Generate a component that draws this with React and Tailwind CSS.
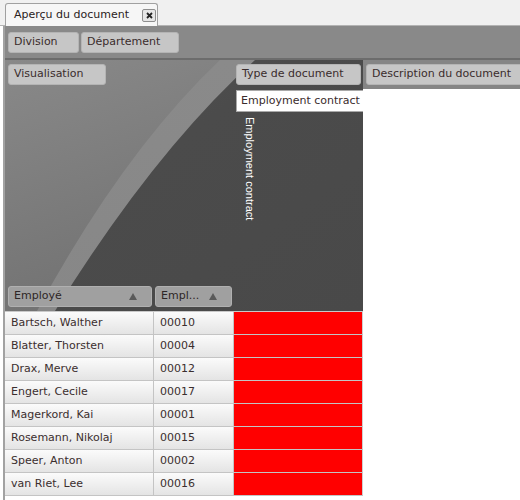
import React from "react";

const rows = [
  ["Bartsch, Walther", "00010"],
  ["Blatter, Thorsten", "00004"],
  ["Drax, Merve", "00012"],
  ["Engert, Cecile", "00017"],
  ["Magerkord, Kai", "00001"],
  ["Rosemann, Nikolaj", "00015"],
  ["Speer, Anton", "00002"],
  ["van Riet, Lee", "00016"],
];

function Btn({ children, className }) {
  return (
    <div
      className={
        "h-[21px] shrink-0 rounded-[3px] bg-[#c6c6c6] border border-[#b4b4b4] flex items-center pl-[5px] text-[#3a2c2c] whitespace-nowrap overflow-hidden " +
        className
      }
    >
      {children}
    </div>
  );
}

function HeadBtn({ children, className }) {
  return (
    <div
      className={
        "h-[21px] shrink-0 rounded-[3px] bg-[#a0a0a0] border border-[#b0b0b0] flex items-center pl-[5px] pr-[14px] text-[#2e2626] whitespace-nowrap " +
        className
      }
    >
      <span>{children}</span>
      <svg className="ml-auto" width="8" height="7" viewBox="0 0 8 7">
        <path d="M4,0 L8,7 L0,7 Z" fill="#5a5a5a" />
      </svg>
    </div>
  );
}

function Swoosh() {
  return (
    <svg
      className="absolute inset-0"
      width="358"
      height="251"
      viewBox="0 0 358 251"
    >
      <defs>
        <linearGradient id="outer" x1="0" y1="0" x2="0" y2="1">
          <stop offset="0" stopColor="#8a8a8a" />
          <stop offset="1" stopColor="#878787" />
        </linearGradient>
        <linearGradient id="inner" x1="0" y1="0" x2="0.3" y2="1">
          <stop offset="0" stopColor="#898989" />
          <stop offset="1" stopColor="#727272" />
        </linearGradient>
        <linearGradient id="dark" x1="0" y1="0" x2="1" y2="1">
          <stop offset="0" stopColor="#555555" />
          <stop offset="0.4" stopColor="#4b4b4b" />
          <stop offset="1" stopColor="#494949" />
        </linearGradient>
      </defs>
      <rect x="0" y="0" width="358" height="251" fill="url(#dark)" />
      <path d="M0,0 H250 Q150,90 50,251 H0 Z" fill="url(#outer)" />
      <path d="M0,0 H215 Q118,92 32,251 H0 Z" fill="url(#inner)" />
    </svg>
  );
}

export default function App() {
  return (
    <div className="w-[520px] h-[500px] bg-white flex flex-col overflow-hidden font-['DejaVu_Sans',sans-serif] text-[11px]">
      {/* tab strip */}
      <div className="h-[26px] shrink-0 bg-[#f0f0f0] border-b border-[#b3b3b3] flex items-end pl-[5px]">
        <div className="w-[153px] h-[23px] -mb-px bg-[#f6f6f6] border border-b-0 border-[#a0a0a0] rounded-t-[3px] flex items-center pl-[8px] pr-[1px] text-[#2a2222]">
          <span>Aperçu du document</span>
          <span className="ml-auto w-[14px] h-[13px] border border-[#8e8e8e] rounded-[2px] bg-[#e6e6e6] flex items-center justify-center">
            <svg width="7" height="7" viewBox="0 0 7 7">
              <path d="M1,1 L6,6 M6,1 L1,6" stroke="#222" strokeWidth="1.8" />
            </svg>
          </span>
        </div>
      </div>

      {/* body */}
      <div className="flex-1 flex flex-col ml-[3px] border-l-2 border-[#a2a2a2]">
        {/* filter row */}
        <div className="h-[34px] shrink-0 bg-[#898989] border-b-2 border-[#6c6c6c] flex items-center pl-[3px] gap-[2px]">
          <Btn className="w-[71px]">Division</Btn>
          <Btn className="w-[98px]">Département</Btn>
        </div>

        <div className="flex-1 flex">
          {/* left pivot */}
          <div className="w-[358px] shrink-0 flex flex-col">
            <div className="relative h-[251px] shrink-0">
              <Swoosh />
              <div className="relative h-full flex flex-col">
                <div className="h-[29px] shrink-0 grid grid-cols-[231px_127px] items-center">
                  <div className="pl-[3px]">
                    <Btn className="w-[98px]">Visualisation</Btn>
                  </div>
                  <Btn className="w-[125px]">Type de document</Btn>
                </div>
                <div className="grid grid-cols-[231px_127px]">
                  <div />
                  <div className="h-[22px] mt-[1px] bg-white border border-[#a9a9a9] border-r-0 flex items-center pl-[4px] text-[#3a2c2c] whitespace-nowrap">
                    Employment contract
                  </div>
                </div>
                <div className="grid grid-cols-[231px_127px]">
                  <div />
                  <div className="pl-[8px] pt-[5px]">
                    <div className="[writing-mode:vertical-rl] text-white text-[11px] font-['Liberation_Sans',sans-serif] leading-[12px]">
                      Employment contract
                    </div>
                  </div>
                </div>
                <div className="flex-1" />
                <div className="flex gap-[3px] pl-[3px] pb-[4px]">
                  <HeadBtn className="w-[144px]">Employé</HeadBtn>
                  <HeadBtn className="w-[77px]">Empl...</HeadBtn>
                </div>
              </div>
            </div>

            {/* rows */}
            <div className="flex flex-col border-t border-[#c9c9c9]">
              {rows.map(([name, id]) => (
                <div key={id} className="h-[23px] flex border-b border-[#c4c4c4]">
                  <div className="w-[149px] shrink-0 bg-linear-to-b from-[#fbfbfb] to-[#e4e4e4] border-r border-[#c4c4c4] flex items-center pl-[6px] text-[#3b2e2e]">
                    {name}
                  </div>
                  <div className="w-[80px] shrink-0 bg-linear-to-b from-[#fbfbfb] to-[#e4e4e4] border-r border-[#c4c4c4] flex items-center pl-[6px] text-[#3b2e2e]">
                    {id}
                  </div>
                  <div className="flex-1 bg-[#ff0000] border-r border-[#cfcfcf]" />
                </div>
              ))}
            </div>
          </div>

          {/* right column */}
          <div className="flex-1 flex flex-col overflow-hidden">
            <div className="h-[29px] shrink-0 bg-[#858585] flex items-center pl-[3px]">
              <Btn className="w-[170px]">Description du document</Btn>
            </div>
            <div className="flex-1 bg-white" />
          </div>
        </div>
      </div>
    </div>
  );
}
